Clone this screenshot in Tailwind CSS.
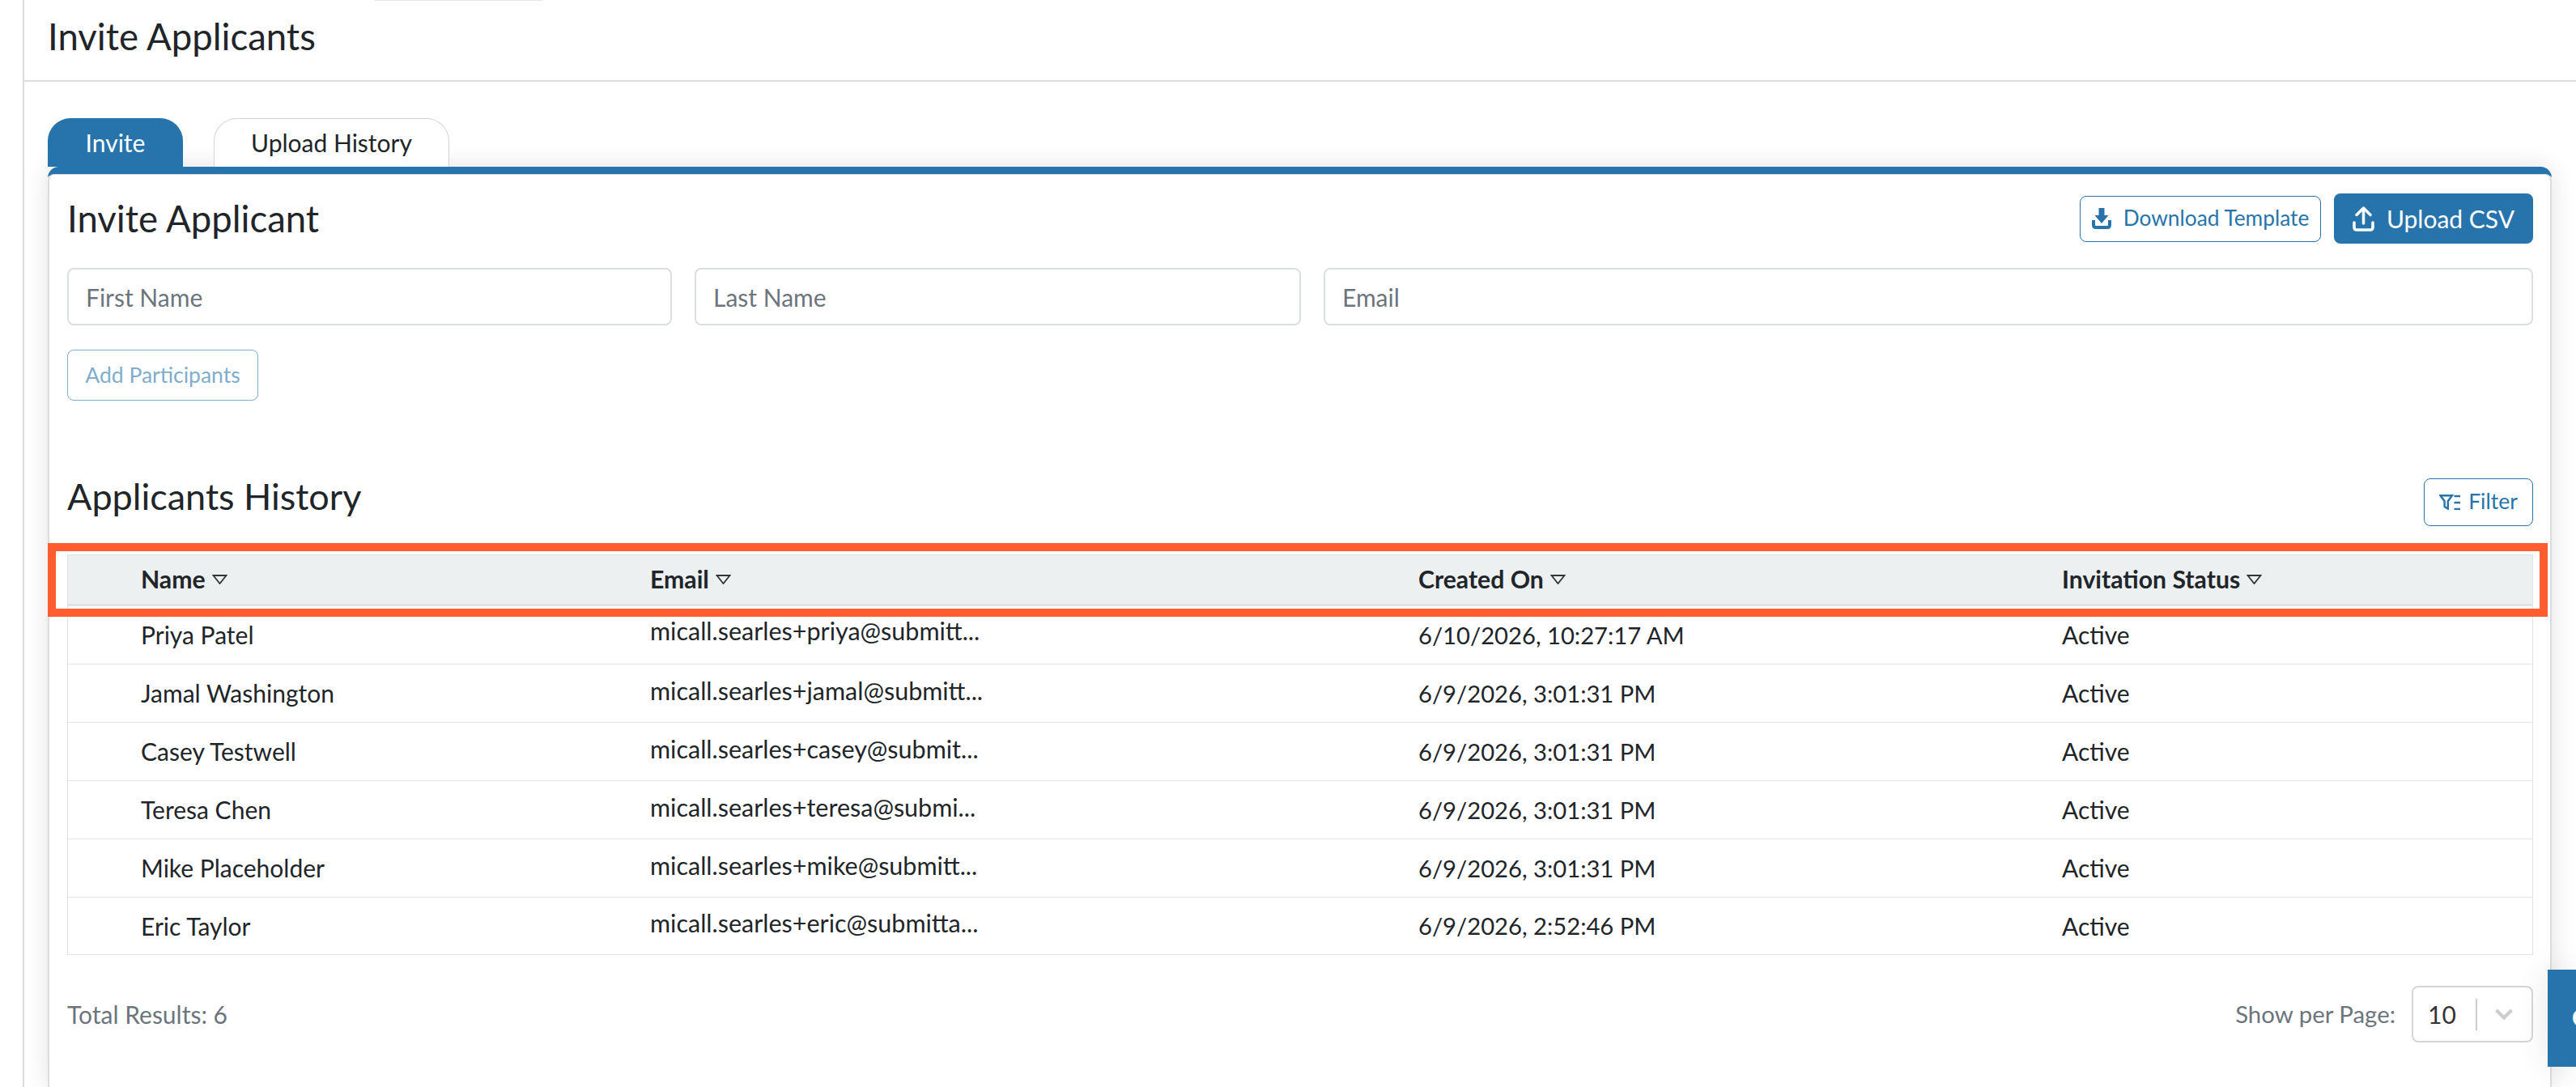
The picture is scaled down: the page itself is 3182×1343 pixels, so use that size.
<!DOCTYPE html>
<html lang="en">
<head>
    <meta charset="UTF-8">
    <title>Invite Applicants</title>
    <script src="https://cdn.jsdelivr.net/npm/@tailwindcss/browser@4"></script>
</head>
<body class="bg-white h-[1343px] overflow-hidden relative font-['Lato',sans-serif] text-[#212529]">
    <!-- top nav remnant -->
    <div class="absolute left-[463px] top-0 w-[207px] h-px bg-[#e3e6ea]"></div>

    <div class="ml-[28px] border-l-2 border-[#dcdcdc] h-full bg-white">
        <!-- page header -->
        <div class="h-[101px] border-b-2 border-[#dedede] pl-[29px] pt-[19px]">
            <h1 class="text-[45.5px] leading-[52px]">Invite Applicants</h1>
        </div>

        <!-- tabs -->
        <div class="flex items-end gap-[38px] pl-[29px] pt-[45px] h-[105px] pr-[30px]">
            <div class="w-[167px] h-[60px] bg-[#2674ab] rounded-t-[28px] flex items-center justify-center text-white text-[30px]">Invite</div>
            <div class="w-[291px] h-[60px] bg-white border border-b-0 border-[#d4d4d4] rounded-t-[28px] flex items-center justify-center text-[30px]">Upload History</div>
        </div>

        <!-- card -->
        <div class="ml-[29px] w-[3093px] h-[1137px] border-t-[9px] border-[#2674ab] rounded-t-[14px] shadow-[0_0_30px_rgba(0,0,0,0.12)] bg-white">
            <div class="h-full border-x-2 border-t border-[#dcdcdc] rounded-t-[8px] pl-[22px] pr-[21px]">
                <div class="flex items-center justify-between h-[108px] mb-[7px]">
                    <h2 class="text-[45.5px] leading-[52px]">Invite Applicant</h2>
                    <div class="flex items-center gap-[16px]">
                        <button class="w-[298px] h-[57px] border border-[#2674ab] rounded-[8px] flex items-center justify-center gap-[15px] text-[#2674ab] text-[26.3px]">
                            <svg class="w-[24px] h-[26px]" viewBox="0 0 24 26">
                                <path d="M8.500 0h7v9h5l-8.500 10L3.500 9h5z" fill="#2674ab"/>
                                <path d="M2 15v6q0 3 3 3h14q3 0 3-3v-6" fill="none" stroke="#2674ab" stroke-width="4"/>
                            </svg>
                            Download Template
                        </button>
                        <button class="w-[246px] h-[62px] bg-[#2674ab] rounded-[8px] flex items-center justify-center gap-[15px] text-white text-[30px]">
                            <svg class="w-[27px] h-[31px]" viewBox="0 0 27 31" fill="none" stroke="#fff" stroke-width="3.500" stroke-linecap="round" stroke-linejoin="round">
                                <path d="M13.500 21V2M5 10.500l8.500-8.500 8.500 8.500"/>
                                <path d="M2 20v6q0 3 3 3h17q3 0 3-3v-6"/>
                            </svg>
                            Upload CSV
                        </button>
                    </div>
                </div>

                <div class="flex gap-[28px]">
                    <input placeholder="First Name" class="w-[747px] h-[71px] border-2 border-[#dcdfe2] rounded-[8px] px-[21px] text-[30px] placeholder:text-[#6c757d]">
                    <input placeholder="Last Name" class="w-[749px] h-[71px] border-2 border-[#dcdfe2] rounded-[8px] px-[21px] text-[30px] placeholder:text-[#6c757d]">
                    <input placeholder="Email" class="flex-1 h-[71px] border-2 border-[#dcdfe2] rounded-[8px] px-[21px] text-[30px] placeholder:text-[#6c757d]">
                </div>

                <button class="mt-[30px] w-[236px] h-[63px] border border-[#7fadcd] rounded-[8px] text-[#7fadcd] text-[26.500px]">Add Participants</button>

                <div class="flex items-center justify-between mt-[88px] h-[74px]">
                    <h2 class="text-[45px] leading-[52px] -mt-[14px]">Applicants History</h2>
                    <button class="w-[135px] h-[59px] border border-[#2674ab] rounded-[8px] flex items-center justify-center gap-[10px] text-[#2674ab] text-[26.5px]">
                        <svg class="w-[26px] h-[19px]" viewBox="0 0 26 19" fill="none" stroke="#2674ab" stroke-width="2.400">
                            <path d="M1.500 1.200h14.500l-5.200 7v9.300l-4.200-2.500v-6.800z"/>
                            <path d="M18.500 2h7.500M18.500 10h7.500M18.500 18h7.500"/>
                        </svg>
                        Filter
                    </button>
                </div>

                <!-- table -->
                <div class="mt-[28px]">
                    <div class="h-[64px] bg-[#ecf0f1] border border-[#e0e3e6] border-b-[3px] grid grid-cols-[629px_949px_795px_1fr] items-center font-bold text-[30.2px] pl-[90px]">
                        <div class="flex items-center gap-[8px]">Name <svg class="w-[19px] h-[12px]" viewBox="0 0 19 12" fill="none" stroke="#333" stroke-width="1.800"><path d="M1.500 1h16L9.500 11z"/></svg></div>
                        <div class="flex items-center gap-[8px]">Email <svg class="w-[19px] h-[12px]" viewBox="0 0 19 12" fill="none" stroke="#333" stroke-width="1.800"><path d="M1.500 1h16L9.500 11z"/></svg></div>
                        <div class="flex items-center gap-[8px]">Created On <svg class="w-[19px] h-[12px]" viewBox="0 0 19 12" fill="none" stroke="#333" stroke-width="1.800"><path d="M1.500 1h16L9.500 11z"/></svg></div>
                        <div class="flex items-center gap-[8px]">Invitation Status <svg class="w-[19px] h-[12px]" viewBox="0 0 19 12" fill="none" stroke="#333" stroke-width="1.800"><path d="M1.500 1h16L9.500 11z"/></svg></div>
                    </div>
                    <div class="border-x border-b border-[#e0e3e6] text-[30px]">
                        <div class="h-[72px] border-b border-[#e0e3e6] grid grid-cols-[629px_949px_795px_1fr] items-center pl-[90px]">
                            <div>Priya Patel</div><div class="-mt-[10px] text-[30.5px]">micall.searles+priya@submitt...</div><div class="text-[29.2px]">6/10/2026, 10:27:17 AM</div><div>Active</div>
                        </div>
                        <div class="h-[72px] border-b border-[#e0e3e6] grid grid-cols-[629px_949px_795px_1fr] items-center pl-[90px]">
                            <div>Jamal Washington</div><div class="-mt-[6px] text-[30.5px]">micall.searles+jamal@submitt...</div><div class="text-[29.2px]">6/9/2026, 3:01:31 PM</div><div>Active</div>
                        </div>
                        <div class="h-[72px] border-b border-[#e0e3e6] grid grid-cols-[629px_949px_795px_1fr] items-center pl-[90px]">
                            <div>Casey Testwell</div><div class="-mt-[6px] text-[30.5px]">micall.searles+casey@submit...</div><div class="text-[29.2px]">6/9/2026, 3:01:31 PM</div><div>Active</div>
                        </div>
                        <div class="h-[72px] border-b border-[#e0e3e6] grid grid-cols-[629px_949px_795px_1fr] items-center pl-[90px]">
                            <div>Teresa Chen</div><div class="-mt-[6px] text-[30.5px]">micall.searles+teresa@submi...</div><div class="text-[29.2px]">6/9/2026, 3:01:31 PM</div><div>Active</div>
                        </div>
                        <div class="h-[72px] border-b border-[#e0e3e6] grid grid-cols-[629px_949px_795px_1fr] items-center pl-[90px]">
                            <div>Mike Placeholder</div><div class="-mt-[6px] text-[30.5px]">micall.searles+mike@submitt...</div><div class="text-[29.2px]">6/9/2026, 3:01:31 PM</div><div>Active</div>
                        </div>
                        <div class="h-[70px] grid grid-cols-[629px_949px_795px_1fr] items-center pl-[90px]">
                            <div>Eric Taylor</div><div class="-mt-[6px] text-[30.5px]">micall.searles+eric@submitta...</div><div class="text-[29.2px]">6/9/2026, 2:52:46 PM</div><div>Active</div>
                        </div>
                    </div>
                </div>

                <!-- footer -->
                <div class="flex items-center justify-between mt-[38px] text-[30px] text-[#6c757d]">
                    <span>Total Results: 6</span>
                    <div class="flex items-center gap-[20px]">
                        <span class="text-[29.4px]">Show per Page:</span>
                        <div class="w-[150px] h-[70px] border-2 border-[#d6d6d6] rounded-[8px] flex items-center pl-[18px] text-[#333]">
                            <span class="w-[59px]">10</span>
                            <span class="w-[2px] h-[39px] bg-[#cccccc]"></span>
                            <svg class="ml-[22px] w-[22px] h-[14px]" viewBox="0 0 22 14" fill="none" stroke="#cccccc" stroke-width="4"><path d="M1.500 2l9.500 9.500L20.500 2"/></svg>
                        </div>
                    </div>
                </div>
            </div>
        </div>
    </div>

    <!-- highlight annotation -->
    <div class="absolute left-[59px] top-[671px] w-[3088px] h-[91px] border-[10px] border-[#ff5c30]"></div>

    <!-- help tab -->
    <div class="absolute left-[3147px] top-[1198px] w-[35px] h-[120px] bg-[#2674ab] shadow-[0_0_40px_rgba(0,0,0,0.1)] overflow-hidden text-white text-[28px] leading-[30px] font-bold pl-[30px] pt-[44px]">C</div>
</body>
</html>
